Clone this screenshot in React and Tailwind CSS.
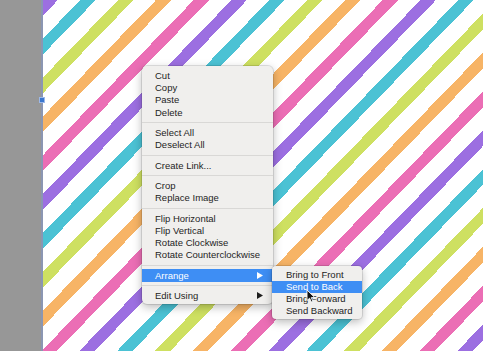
const groups=[
["Cut","Copy","Paste","Delete"],
["Select All","Deselect All"],
["Create Link..."],
["Crop","Replace Image"],
["Flip Horizontal","Flip Vertical","Rotate Clockwise","Rotate Counterclockwise"],
[{label:"Arrange",sub:true,active:true}],
[{label:"Edit Using",sub:true}]
]

const subItems=[
{label:"Bring to Front"},
{label:"Send to Back",active:true},
{label:"Bring Forward"},
{label:"Send Backward"}
]

function Arrow({white}){
return(
<svg width="6" height="7" viewBox="0 0 6 7" className="absolute right-[10px] top-[2.7px]">
<path d="M0 0 L6 3.5 L0 7 Z" fill={white?"#ffffff":"#1e1e1e"}/>
</svg>
)
}

function Row({item}){
const it=typeof item==="string"?{label:item}:item
return(
<div className={"relative h-[12.3px] flex items-center pl-[13px] "+(it.active?"bg-[#3e8ef4] text-white":"text-[#242424]")}>
{it.label}
{it.sub && <Arrow white={it.active}/>}
</div>
)
}

function Cursor(){
return(
<svg width="10" height="14" viewBox="-1 -1 10 14" className="absolute left-[306px] top-[289px]">
<path d="M0 0 L0 10.5 L2.6 8.2 L4.3 12 L5.9 11.3 L4.3 7.6 L7.8 7.6 Z" fill="#111" stroke="#fff" strokeWidth="0.9" strokeLinejoin="round"/>
</svg>
)
}

export default function App(){
return(
<div className="relative w-[483px] h-[351px] overflow-hidden flex font-['Liberation_Sans',Arial,sans-serif] text-[9.5px] leading-none">

<div className="w-[41px] h-full bg-[#979797]"></div>
<div className="w-[2px] h-full bg-[#8b96b2]"></div>
<div className="flex-1 h-full bg-[repeating-linear-gradient(134.2deg,#9c6fe1_0px,#9c6fe1_10.7px,#fff_10.7px,#fff_26.8px,#4bc2d4_26.8px,#4bc2d4_37.8px,#fff_37.8px,#fff_53.9px,#cee061_53.9px,#cee061_64.9px,#fff_64.9px,#fff_81px,#f7b466_81px,#f7b466_92px,#fff_92px,#fff_108.1px,#eb6eb5_108.1px,#eb6eb5_119.1px,#fff_119.1px,#fff_135.2px,#9c6fe1_135.2px,#9c6fe1_135.5px)]"></div>

<div className="absolute left-[39px] top-[97px] w-[6px] h-[6px] bg-[#3b77cf] border border-[#9bb8ea]"></div>

<div className="absolute left-[142px] top-[66px] w-[131px] h-[238px] pt-[3.5px] pb-[2px] rounded-[5px] bg-[#f0efed] shadow-[0_3px_10px_rgba(0,0,0,0.28)] ring-1 ring-black/10">
{groups.map((g,gi)=>(
<div key={gi}>
{gi>0 && (
<div className="h-[8px] flex items-center">
<div className="w-full h-px bg-[#d9d8d6]"></div>
</div>
)}
{g.map((item,i)=>(
<Row key={i} item={item}/>
))}
</div>
))}
</div>

<div className="absolute left-[272px] top-[266px] w-[90px] h-[53px] pt-[3px] rounded-[4px] bg-[#f0efed] shadow-[0_3px_10px_rgba(0,0,0,0.28)] ring-1 ring-black/10">
{subItems.map(s=>(
<div
key={s.label}
className={"h-[12px] flex items-center pl-[14px] "+(s.active?"bg-[#3e8ef4] text-white":"text-[#242424]")}
>
{s.label}
</div>
))}
</div>

<Cursor/>

</div>
)
}
